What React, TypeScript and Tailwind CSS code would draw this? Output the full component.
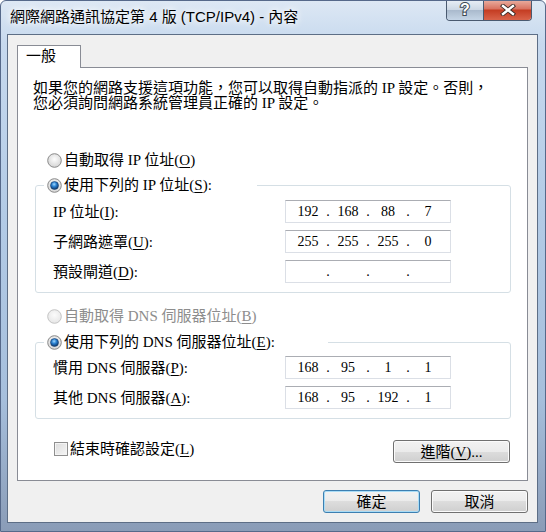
import { Fragment } from "react";

const uiFont = "font-['Liberation_Serif','Noto_Sans_CJK_TC',serif]";

const Radio = ({ checked = false, disabled = false }: { checked?: boolean; disabled?: boolean }) => (
    <svg width="15" height="15" viewBox="0 0 15 15" className="shrink-0">
        <defs>
            <radialGradient id="rb-fill" cx="50%" cy="40%" r="60%">
                <stop offset="0%" stopColor="#fdfdfd" />
                <stop offset="100%" stopColor="#d4d4d4" />
            </radialGradient>
            <radialGradient id="rb-dis" cx="50%" cy="40%" r="60%">
                <stop offset="0%" stopColor="#fbfbfb" />
                <stop offset="100%" stopColor="#e6e6e6" />
            </radialGradient>
            <radialGradient id="rb-dot" cx="45%" cy="35%" r="65%">
                <stop offset="0%" stopColor="#9fd8ff" />
                <stop offset="45%" stopColor="#2a80d0" />
                <stop offset="100%" stopColor="#0b3468" />
            </radialGradient>
        </defs>
        <circle cx="7.5" cy="7.5" r="6.8" fill={disabled ? "url(#rb-dis)" : "url(#rb-fill)"} stroke={disabled ? "#c4c4c4" : "#8a8a8a"} strokeWidth="1" />
        {checked && <circle cx="7.5" cy="7.5" r="4" fill="url(#rb-dot)" stroke="#1b3f6e" strokeWidth="0.6" />}
    </svg>
);

const Mn = ({ k }: { k: string }) => (
    <>
        (<span className="underline underline-offset-2">{k}</span>)
    </>
);

const IpBox = ({ parts }: { parts: string[] }) => (
    <div className="flex h-[23px] w-[166px] items-center border border-[#dbdfe6] border-t-[#abadb3] bg-white pl-[6px] font-['Liberation_Serif',serif] text-[14px] leading-[16px]">
        {parts.map((p, i) => (
            <Fragment key={i}>
                {i > 0 && <span className="w-[8px] text-center">.</span>}
                <span className="w-[32px] text-center">{p}</span>
            </Fragment>
        ))}
    </div>
);

const Row = ({ label, parts }: { label: React.ReactNode; parts: string[] }) => (
    <div className="grid grid-cols-[232px_166px] items-center">
        <span className="leading-[16px]">{label}</span>
        <IpBox parts={parts} />
    </div>
);

const WinButton = ({ children, primary = false, className = "" }: { children: React.ReactNode; primary?: boolean; className?: string }) => (
    <div
        className={
            "flex h-[23px] items-center justify-center rounded-[3px] border bg-[linear-gradient(#f2f2f2,#ebebeb_50%,#dddddd_50%,#cfcfcf)] leading-[16px] " +
            (primary
                ? "border-[#3c7fb1] shadow-[inset_0_0_0_1px_#a9dcf6] "
                : "border-[#707070] shadow-[inset_0_0_0_1px_#fbfbfb] ") +
            className
        }
    >
        {children}
    </div>
);

export default function App() {
    return (
        <div className={"flex h-[532px] w-[546px] flex-col overflow-hidden rounded-t-[6px] border border-[#56698a] bg-[linear-gradient(180deg,#dde8f4_0%,#c7d9ee_8%,#b3cbe6_40%,#a6bfdc_75%,#8a9cb7_100%)] pb-[8px] pl-[6px] pr-[7px] text-[15px] text-black " + uiFont}>
            {/* title bar */}
            <div className="flex h-[33px] shrink-0 items-start">
                <div className="mt-[7px] pl-[3px] font-['Liberation_Sans','Noto_Sans_CJK_TC',sans-serif] text-[15px] leading-[18px] [text-shadow:0_0_6px_#ffffff,0_0_10px_#ffffff]">
                    網際網路通訊協定第 4 版 (TCP/IPv4) - 內容
                </div>
                <div className="ml-auto mr-[6px] flex h-[21px] -mt-px overflow-hidden rounded-b-[4px] border border-t-0 border-[#4a5a70]">
                    <div className="flex w-[37px] items-center justify-center border-r border-[#4a5a70] bg-[linear-gradient(#e9eff6,#cbd7e4_50%,#a9b9cc_50%,#c5d5e6)]">
                        <span className="font-['Liberation_Sans',sans-serif] text-[16px] font-bold leading-none text-white [paint-order:stroke_fill] [-webkit-text-stroke:2px_#3d4753]">?</span>
                    </div>
                    <div className="flex w-[47px] items-center justify-center bg-[linear-gradient(#eab0a2,#d87260_45%,#c43c22_50%,#d9634a)]">
                        <svg width="16" height="12" viewBox="0 0 16 12">
                            <path d="M3 2 L13 10 M13 2 L3 10" stroke="#3a2a26" strokeWidth="4.2" strokeLinecap="square" />
                            <path d="M3 2 L13 10 M13 2 L3 10" stroke="#ffffff" strokeWidth="2.4" strokeLinecap="square" />
                        </svg>
                    </div>
                </div>
            </div>

            {/* client area */}
            <div className="flex flex-1 flex-col border border-[#5d6e86] bg-[#f0f0f0] pb-[9px]">
                <div className="ml-[9px] mt-[10px] w-[512px]">
                    <div className="relative z-10 -mb-px h-[23px] w-[64px] border border-b-0 border-[#898c95] bg-white pl-[8px] leading-[21px]">
                        一般
                    </div>
                </div>
                <div className="ml-[9px] flex w-[511px] flex-1 flex-col border border-[#898c95] bg-white">
                    <p className="ml-[15px] mt-[13px] whitespace-nowrap leading-[15px]">
                        如果您的網路支援這項功能，您可以取得自動指派的 IP 設定。否則，
                        <br />
                        您必須詢問網路系統管理員正確的 IP 設定。
                    </p>

                    <div className="ml-[29px] mt-[41px] flex h-[16px] items-center gap-[2px] leading-[16px]">
                        <Radio />
                        <span>自動取得 IP 位址<Mn k="O" /></span>
                    </div>

                    <fieldset className="ml-[17px] mt-[9px] w-[476px] rounded-[3px] border border-[#d5dfe5] px-0 pb-[9px]">
                        <legend className="ml-[8px] flex h-[16px] w-[213px] items-center gap-[2px] pl-[3px] leading-[16px]">
                            <Radio checked />
                            <span>使用下列的 IP 位址<Mn k="S" />:</span>
                        </legend>
                        <div className="flex flex-col gap-[7px] pl-[17px] pt-[7px]">
                            <Row label={<>IP 位址<Mn k="I" />:</>} parts={["192", "168", "88", "7"]} />
                            <Row label={<>子網路遮罩<Mn k="U" />:</>} parts={["255", "255", "255", "0"]} />
                            <Row label={<>預設閘道<Mn k="D" />:</>} parts={["", "", "", ""]} />
                        </div>
                    </fieldset>

                    <div className="ml-[29px] mt-[15px] flex h-[16px] items-center gap-[2px] leading-[16px] text-[#8d8d8d]">
                        <Radio disabled />
                        <span>自動取得 DNS 伺服器位址<Mn k="B" /></span>
                    </div>

                    <fieldset className="ml-[17px] mt-[10px] w-[476px] rounded-[3px] border border-[#d5dfe5] px-0 pb-[9px]">
                        <legend className="ml-[8px] flex h-[16px] w-[284px] items-center gap-[2px] pl-[3px] leading-[16px]">
                            <Radio checked />
                            <span>使用下列的 DNS 伺服器位址<Mn k="E" />:</span>
                        </legend>
                        <div className="flex flex-col gap-[7px] pl-[17px] pt-[6px]">
                            <Row label={<>慣用 DNS 伺服器<Mn k="P" />:</>} parts={["168", "95", "1", "1"]} />
                            <Row label={<>其他 DNS 伺服器<Mn k="A" />:</>} parts={["168", "95", "192", "1"]} />
                        </div>
                    </fieldset>

                    <div className="ml-[36px] mr-[17px] mt-[21px] flex items-start justify-between">
                        <div className="mt-[1px] flex h-[16px] items-center gap-[2px] leading-[16px]">
                            <span className="h-[14px] w-[14px] border border-[#8f8f8f] bg-[linear-gradient(135deg,#dcdcdc,#f6f6f6)] shadow-[inset_0_0_0_1px_#f4f4f4]" />
                            <span>結束時確認設定<Mn k="L" /></span>
                        </div>
                        <WinButton className="w-[117px]">
                            進階<Mn k="V" />...
                        </WinButton>
                    </div>
                </div>

                <div className="mr-[9px] mt-[9px] flex justify-end gap-[11px]">
                    <WinButton primary className="w-[97px]">確定</WinButton>
                    <WinButton className="w-[97px]">取消</WinButton>
                </div>
            </div>
        </div>
    );
}
